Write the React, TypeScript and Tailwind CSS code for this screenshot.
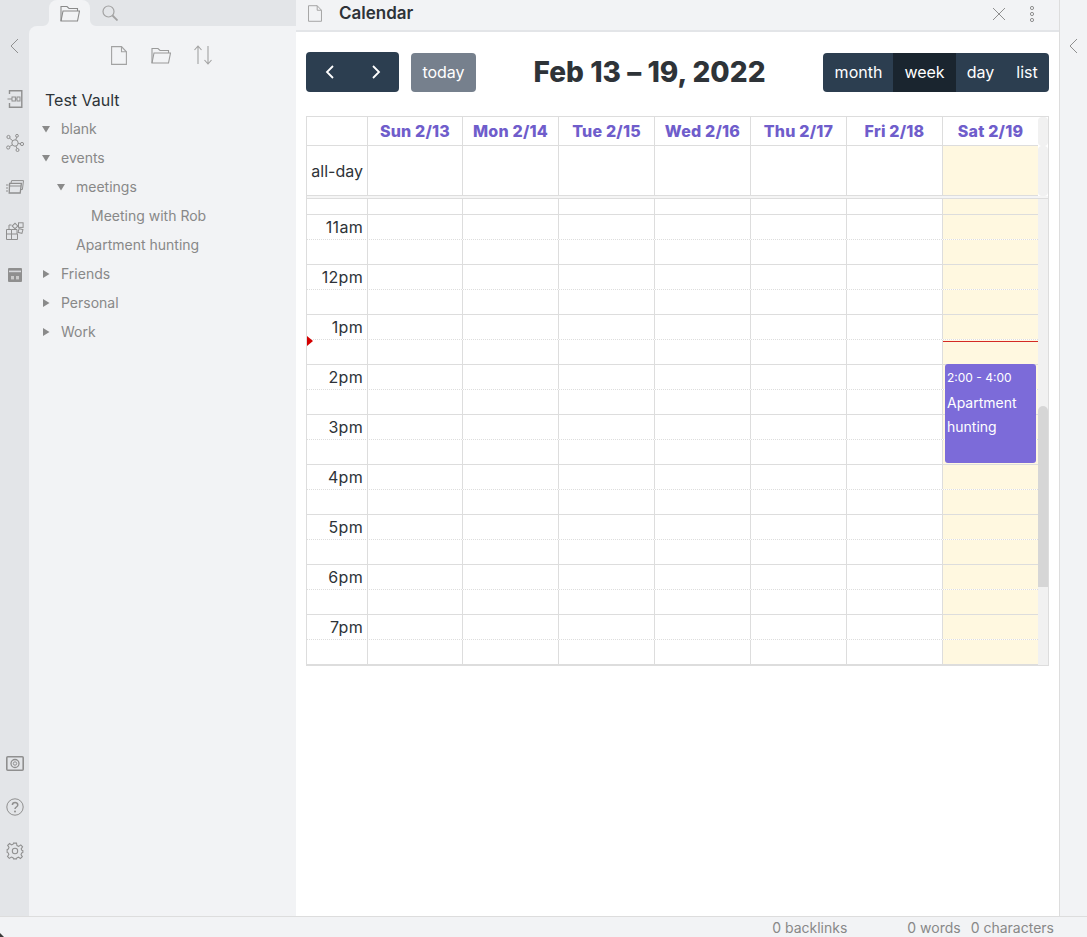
import React from "react";

const ICON = "#8f8f8f";

const Chevron = ({ dir }: { dir: "left" | "right" }) => (
  <svg width="16" height="16" viewBox="0 0 16 16" fill="none" stroke={ICON} strokeWidth="1">
    {dir === "left" ? <path d="M11 1 L4 8 L11 15" /> : <path d="M5 1 L12 8 L5 15" />}
  </svg>
);

const DocIcon = ({ w = 16, h = 19 }: { w?: number; h?: number }) => (
  <svg width={w} height={h} viewBox="0 0 16 19" fill="none" stroke="#a2a2a2" strokeWidth="1.1">
    <path d="M0.6 0.6 H10.5 L15.4 5.8 V18.4 H0.6 Z" />
    <path d="M10.5 0.6 V5.8 H15.4" />
  </svg>
);

const FolderIcon = ({ stroke = "#9a9a9a" }: { stroke?: string }) => (
  <svg width="20" height="17" viewBox="0 0 20 17" fill="none" stroke={stroke} strokeWidth="1.1">
    <path d="M1 16 V1.5 H7 L9 3.5 H17.5 V6" />
    <path d="M1 16 L3 6 H19.5 L17.5 16 Z" />
  </svg>
);

const SearchIcon = () => (
  <svg width="16" height="16" viewBox="0 0 16 16" fill="none" stroke="#a2a2a2" strokeWidth="1.2">
    <circle cx="6.5" cy="6.5" r="5.5" />
    <path d="M10.5 10.5 L15.5 15.5" strokeWidth="1.8" />
  </svg>
);

const SortIcon = () => (
  <svg width="20" height="20" viewBox="0 0 20 20" fill="none" stroke="#a2a2a2" strokeWidth="1.1">
    <path d="M5 19 V1 M1.5 5 L5 1 L8.5 5" />
    <path d="M15 1 V19 M11.5 15 L15 19 L18.5 15" />
  </svg>
);

const TemplateIcon = () => (
  <svg width="16" height="18" viewBox="0 0 16 18" fill="none" stroke={ICON} strokeWidth="1">
    <path d="M2.5 4 V0.8 H14.8 V17.2 H2.5 V13" strokeWidth="1.4" />
    <rect x="5" y="7" width="3.4" height="4" />
    <rect x="10" y="7" width="3" height="4" />
    <path d="M0.5 9 H5 M8.4 9 H10" />
  </svg>
);

const GraphIcon = () => (
  <svg width="18" height="18" viewBox="0 0 18 18" fill="none" stroke={ICON} strokeWidth="1">
    <circle cx="9" cy="9" r="3.2" />
    <circle cx="2.5" cy="3" r="1.6" />
    <circle cx="11" cy="1.8" r="1.4" />
    <circle cx="16" cy="10" r="1.6" />
    <circle cx="2.2" cy="13.5" r="1.6" />
    <circle cx="11.5" cy="16" r="1.5" />
    <path d="M3.6 4.2 L6.8 6.8 M10.6 3.2 L9.8 5.9 M12.2 9.4 L14.4 9.9 M3.6 12.6 L6.3 10.8 M10 12.1 L11 14.5" />
  </svg>
);

const CardsIcon = () => (
  <svg width="18" height="14" viewBox="0 0 18 14" fill="none" stroke={ICON} strokeWidth="1">
    <path d="M5 3 L5.6 0.6 H17.5 L16.4 9.5 H15" />
    <path d="M3.6 3.4 H15.4 L14.2 13 H3.2 Z" strokeWidth="1.3" />
    <path d="M3.5 6 H15" />
    <path d="M0 5 H2.5 M0 8 H2 M0 11 H2" />
  </svg>
);

const BlocksIcon = () => (
  <svg width="18" height="18" viewBox="0 0 18 18" fill="none" stroke={ICON} strokeWidth="1">
    <path d="M0.5 7.5 H5.5 V17.5 M0.5 7.5 V17.5 H11.5 V12 H0.5" />
    <path d="M5.5 3 H3 V7.5 M5.5 7.5 H11 V12" />
    <rect x="12.5" y="0.8" width="4.6" height="4.6" />
    <rect x="7" y="2" width="4" height="4" transform="rotate(45 9 4)" />
    <rect x="12.5" y="7" width="4" height="4" transform="rotate(15 14.5 9)" />
  </svg>
);

const CalendarIcon = () => (
  <svg width="14" height="14" viewBox="0 0 14 14">
    <rect width="14" height="14" rx="1" fill="#8f8f8f" />
    <rect x="1" y="2.6" width="12" height="1.6" fill="#d6d8db" />
    <rect x="3" y="8" width="3" height="3.4" fill="#c9c9c9" />
    <rect x="8" y="8" width="3" height="3.4" fill="#c9c9c9" />
  </svg>
);

const VaultIcon = () => (
  <svg width="18" height="15" viewBox="0 0 18 15" fill="none" stroke={ICON}>
    <rect x="0.8" y="0.8" width="16.4" height="13.4" rx="1" strokeWidth="1.6" />
    <circle cx="9" cy="7.5" r="4" strokeWidth="1.3" />
    <circle cx="9" cy="7.5" r="1.7" strokeWidth="1" />
  </svg>
);

const HelpIcon = () => (
  <svg width="18" height="18" viewBox="0 0 18 18" fill="none" stroke={ICON}>
    <circle cx="9" cy="9" r="8.2" strokeWidth="1" />
    <path d="M6.4 7 C6.4 3.8 11.8 3.8 11.8 7 C11.8 9 9 9 9 11" strokeWidth="1.5" />
    <circle cx="9" cy="13.4" r="1" fill={ICON} stroke="none" />
  </svg>
);

const GearIcon = () => (
  <svg width="18" height="18" viewBox="0 0 24 24" fill="none" stroke={ICON} strokeWidth="1.4">
    <circle cx="12" cy="12" r="3.6" />
    <path d="M10 1.5 H14 L14.6 4.8 L16.9 5.8 L19.7 3.9 L22.1 6.5 L20.2 9.2 L21.1 11 L22.5 11.5 V14 L20.9 14.6 L20 16.8 L21.8 19.6 L19.2 22 L16.6 20.2 L14.5 21.1 L14 22.5 H10 L9.4 20.9 L7.2 20 L4.4 21.8 L2 19.2 L3.8 16.6 L2.9 14.5 L1.5 14 V10 L3.1 9.4 L4 7.2 L2.2 4.4 L4.8 2 L7.4 3.8 L9.5 2.9 Z" />
  </svg>
);

const treeRows = [
  { label: "blank", pad: "pl-[13px]", arrow: "down" },
  { label: "events", pad: "pl-[13px]", arrow: "down" },
  { label: "meetings", pad: "pl-[28px]", arrow: "down" },
  { label: "Meeting with Rob", pad: "pl-[62px]", arrow: "" },
  { label: "Apartment hunting", pad: "pl-[47px]", arrow: "" },
  { label: "Friends", pad: "pl-[13px]", arrow: "right" },
  { label: "Personal", pad: "pl-[13px]", arrow: "right" },
  { label: "Work", pad: "pl-[13px]", arrow: "right" },
];

const days = ["Sun 2/13", "Mon 2/14", "Tue 2/15", "Wed 2/16", "Thu 2/17", "Fri 2/18", "Sat 2/19"];
const hours = ["11am", "12pm", "1pm", "2pm", "3pm", "4pm", "5pm", "6pm", "7pm"];
const dayWidths = ["w-[95px]", "w-[96px]", "w-[96px]", "w-[96px]", "w-[96px]", "w-[96px]", "w-[95px]"];

// one line of the week grid: label cell + seven day cells + scrollbar gutter
const GridRow = ({
  rowClass,
  label,
  cells,
  gutter = "bg-[#f1f1f1]",
}: {
  rowClass: string;
  label?: React.ReactNode;
  cells?: React.ReactNode[];
  gutter?: string;
}) => (
  <div className="flex">
    <div className={`flex ${rowClass}`}>
      <div className="w-[61px] shrink-0 border-r border-[#ddd]">{label}</div>
      {dayWidths.map((w, i) => (
        <div
          key={i}
          className={`${w} shrink-0 ${i < 6 ? "border-r border-[#ddd]" : "bg-[#fff8e0]"}`}
        >
          {cells ? cells[i] : null}
        </div>
      ))}
    </div>
    <div className={`w-[10px] shrink-0 ${gutter}`} />
  </div>
);

export default function App() {
  return (
    <div
      className="relative w-[1087px] h-[937px] overflow-hidden flex flex-col bg-white text-[#2e3338]"
      style={{ fontFamily: "Inter, 'Liberation Sans', sans-serif" }}
    >
      <div className="flex h-[916px]">
        {/* left side */}
        <div className="w-[296px] flex flex-col bg-[#e3e5e8]">
          <div className="h-[26px] flex pl-[49px]">
            <div className="relative w-[41px] h-[26px] bg-[#f2f3f5] rounded-t-lg flex items-center justify-center">
              <svg width="6" height="6" viewBox="0 0 6 6" className="absolute -left-[6px] bottom-0" fill="#f2f3f5">
                <path d="M6 0 V6 H0 C3 6 6 3 6 0 Z" />
              </svg>
              <svg width="6" height="6" viewBox="0 0 6 6" className="absolute -right-[6px] bottom-0" fill="#f2f3f5">
                <path d="M0 0 V6 H6 C3 6 0 3 0 0 Z" />
              </svg>
              <FolderIcon stroke="#8a8a8a" />
            </div>
            <div className="ml-[12px] flex items-center">
              <SearchIcon />
            </div>
          </div>
          <div className="flex-1 flex">
            <div className="w-[29px] flex flex-col items-center pt-[12px] pb-[56px]">
              <Chevron dir="left" />
              <div className="mt-[36px] flex flex-col items-center">
                <div className="h-[18px] flex items-center"><TemplateIcon /></div>
                <div className="h-[18px] mt-[26px] flex items-center"><GraphIcon /></div>
                <div className="h-[18px] mt-[26px] flex items-center"><CardsIcon /></div>
                <div className="h-[18px] mt-[26px] flex items-center"><BlocksIcon /></div>
                <div className="h-[18px] mt-[26px] flex items-center"><CalendarIcon /></div>
              </div>
              <div className="mt-auto flex flex-col items-center">
                <div className="h-[18px] flex items-center"><VaultIcon /></div>
                <div className="h-[18px] mt-[26px] flex items-center"><HelpIcon /></div>
                <div className="h-[18px] mt-[26px] flex items-center"><GearIcon /></div>
              </div>
            </div>
            <div className="flex-1 bg-[#f2f3f5] rounded-tl-lg">
              <div className="flex justify-center items-center gap-[22px] pt-[19px] pr-[3px] h-[39px]">
                <div className="w-[20px] flex justify-center"><DocIcon /></div>
                <div className="w-[20px] flex justify-center"><FolderIcon /></div>
                <div className="w-[20px] flex justify-center"><SortIcon /></div>
              </div>
              <div className="pl-[16px] mt-[23px] h-[24px] leading-[24px] text-[16px] text-[#2e3338]">Test Vault</div>
              <div className="mt-[2px]">
                {treeRows.map((row) => (
                  <div key={row.label} className={`h-[29px] flex items-center ${row.pad} text-[14px] text-[#888888]`}>
                    {row.arrow && (
                      <svg width="8" height="8" viewBox="0 0 8 8" className="mr-[11px] shrink-0" fill="#8a8a8a">
                        {row.arrow === "down" ? <path d="M0 1 H8 L4 7.5 Z" /> : <path d="M1 0 V8 L7.5 4 Z" />}
                      </svg>
                    )}
                    {row.label}
                  </div>
                ))}
              </div>
            </div>
          </div>
        </div>

        {/* main pane */}
        <div className="w-[763px] flex flex-col bg-white">
          <div className="h-[32px] shrink-0 bg-[#f2f3f5] border-b-2 border-[#e3e5e8] flex items-center pl-[12px] pr-[24px] pb-[3px]">
            <DocIcon w={14} h={17} />
            <span className="ml-[17px] text-[17px] font-semibold text-[#2e3338]">Calendar</span>
            <svg width="14" height="14" viewBox="0 0 14 14" className="ml-auto" fill="none" stroke="#8f8f8f" strokeWidth="1">
              <path d="M1 1 L13 13 M13 1 L1 13" />
            </svg>
            <svg width="6" height="16" viewBox="0 0 6 16" className="ml-[23px]" fill="none" stroke="#8f8f8f" strokeWidth="1">
              <circle cx="3" cy="2" r="1.6" />
              <circle cx="3" cy="8" r="1.6" />
              <circle cx="3" cy="14" r="1.6" />
            </svg>
          </div>

          <div className="px-[10px] pt-[20px]">
            <div className="flex items-center justify-between h-[40px]">
              <div className="flex items-center">
                <div className="w-[93px] h-[40px] bg-[#2c3e50] rounded-[4px] flex items-center">
                  <button className="w-[47px] flex justify-center">
                    <svg width="10" height="14" viewBox="0 0 10 14" fill="none" stroke="white" strokeWidth="1.8"><path d="M8 1 L2 7 L8 13" /></svg>
                  </button>
                  <button className="w-[45px] flex justify-center">
                    <svg width="10" height="14" viewBox="0 0 10 14" fill="none" stroke="white" strokeWidth="1.8"><path d="M2 1 L8 7 L2 13" /></svg>
                  </button>
                </div>
                <button className="ml-[12px] w-[65px] h-[39px] mt-[1px] pb-[2px] bg-[#76808d] rounded-[4px] text-white text-[16px]">today</button>
              </div>
              <h2 className="text-[28px] font-extrabold text-[#2e3338] leading-[40px] tracking-[0.05px]">Feb 13 – 19, 2022</h2>
              <div className="flex h-[39px] mt-[1px] pb-[1px] rounded-[4px] overflow-hidden bg-[#2c3e50] text-white text-[16px]">
                <button className="w-[70px] pl-[1px] pb-[1px]">month</button>
                <button className="w-[63px] -mb-[1px] pb-[2px] bg-[#1a252f]">week</button>
                <button className="w-[49px] pb-[1px]">day</button>
                <button className="w-[44px] pb-[1px]">list</button>
              </div>
            </div>

            {/* week grid */}
            <div className="relative mt-[24px] w-[743px] h-[550px] border border-[#ddd]">
              <GridRow
                rowClass="h-[29px] border-b border-[#ddd]"
                gutter="bg-[#f1f1f1] rounded-[4px]"
                cells={days.map((d) => (
                  <div className="h-full bg-white flex items-center justify-center text-[16px] font-extrabold tracking-[0.2px] text-[#6f5dcb] pb-[1px]">{d}</div>
                ))}
              />
              <GridRow
                rowClass="h-[50px] border-b border-[#ddd]"
                gutter="bg-[#f1f1f1] rounded-[4px]"
                label={<div className="h-full flex items-center justify-end pr-[4px] text-[16px]">all-day</div>}
              />
              <div className="h-[3px] border-b border-[#ddd] bg-[#f5f5f5]" />
              <GridRow rowClass="h-[16px] border-b border-[#ddd]" />
              {hours.map((h) => (
                <React.Fragment key={h}>
                  <GridRow
                    rowClass="h-[25px] border-b border-dotted border-[#ddd]"
                    label={<div className="h-full flex items-center justify-end pr-[4px] text-[16px] tracking-[0.3px]">{h}</div>}
                  />
                  <GridRow rowClass="h-[25px] border-b border-[#ddd]" />
                </React.Fragment>
              ))}

              {/* scrollbar thumb */}
              <div className="absolute left-[731px] top-[289px] w-[10px] h-[181px] bg-[#d6d6d6] rounded-t-[5px]" />
              {/* now indicator */}
              <div className="absolute left-0 top-[219px] w-0 h-0 border-y-[5px] border-y-transparent border-l-[6px] border-l-[#d40000]" />
              <div className="absolute left-[636px] top-[224px] w-[95px] h-px bg-[#d42a24]" />
              {/* event */}
              <div className="absolute left-[638px] top-[247px] w-[91px] h-[99px] bg-[#7c6bd9] rounded-[3px] px-[2px] text-white">
                <div className="text-[12px] leading-[18px] mt-[5px]">2:00 - 4:00</div>
                <div className="text-[14px] leading-[24px] mt-[4px]">Apartment hunting</div>
              </div>
            </div>
          </div>
        </div>

        {/* right ribbon */}
        <div className="flex-1 bg-[#f2f3f5] border-l border-[#ddd] flex justify-center pt-[38px]">
          <Chevron dir="left" />
        </div>
      </div>

      <div className="h-[21px] bg-[#f2f3f5] border-t border-[#ddd] flex items-center justify-end pr-[33px] text-[14px] text-[#888888]">
        <span>0 backlinks</span>
        <span className="ml-[60px]">0 words</span>
        <span className="ml-[10px]">0 characters</span>
      </div>

      {/* window corner peeking in */}
      <svg width="4" height="4" viewBox="0 0 4 4" className="absolute left-0 bottom-0" fill="#3a3a3a">
        <path d="M0 0 L4 4 H0 Z" />
      </svg>
    </div>
  );
}
